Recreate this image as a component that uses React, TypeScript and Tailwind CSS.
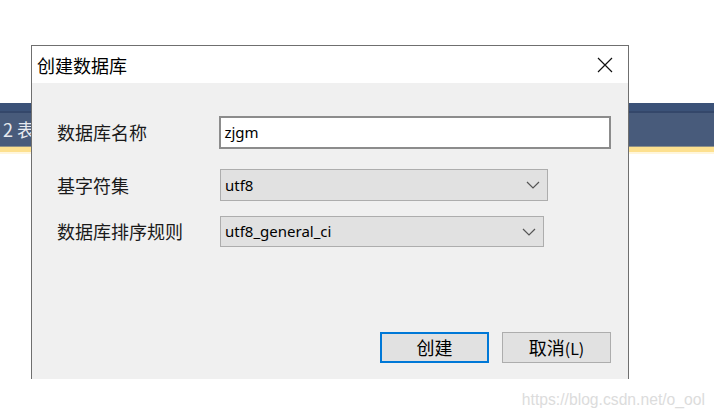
import React from "react";

const cjk = { fontFamily: '"Microsoft YaHei", "Noto Sans CJK SC", sans-serif' };
const latin = { fontFamily: '"Segoe UI", "Noto Sans", "Noto Sans CJK SC", sans-serif' };

function Chevron() {
  return (
    <svg width="14" height="8" viewBox="0 0 14 8" className="shrink-0">
      <path d="M1 1 L7 7 L13 1" fill="none" stroke="#555" strokeWidth="1.2" />
    </svg>
  );
}

export default function App() {
  return (
    <div className="relative w-[714px] h-[417px] bg-white overflow-hidden">
      <div className="h-[103px]" />
      <div className="flex flex-col">
        <div className="h-[8px] bg-[#3b5278]" />
        <div className="h-[2px] bg-[#34476a]" />
        <div className="h-[33px] bg-[#485b7b] flex items-center pl-[3px] text-[18px] text-[#e6e9ef]" style={cjk}>
          2 表
        </div>
        <div className="h-[1px] bg-[#8d8f86]" />
        <div className="h-[5px] bg-[#fde08f]" />
        <div className="h-[2px] bg-[#fff6dc]" />
      </div>

      <div className="absolute left-[31px] top-[45px] w-[598px] h-[334px] border border-b-0 border-[#6f6f6f] flex flex-col">
        <div className="h-[37px] bg-white flex items-center justify-between pl-[5px] pr-[15px]">
          <span className="text-[18px] text-black leading-none" style={cjk}>创建数据库</span>
          <svg width="16" height="16" viewBox="0 0 16 16">
            <path d="M1 1 L15 15 M15 1 L1 15" stroke="#111" strokeWidth="1.2" />
          </svg>
        </div>
        <div className="flex-1 bg-[#f0f0f0] flex flex-col pl-[25px] pr-[17px] pt-[33px] pb-[16px]">
          <div className="flex items-center h-[33px]">
            <div className="w-[163px] text-[18px] text-[#1a1a1a]" style={cjk}>数据库名称</div>
            <div className="w-[393px] h-[33px] bg-white border-2 border-[#8c8c8c] flex items-center pl-[3px] text-[15px] text-black" style={latin}>
              zjgm
            </div>
          </div>
          <div className="flex items-center h-[32px] mt-[20px]">
            <div className="w-[163px] text-[18px] text-[#1a1a1a]" style={cjk}>基字符集</div>
            <div className="w-[328px] h-[32px] bg-[#e1e1e1] border border-[#adadad] flex items-center justify-between pl-[4px] pr-[7px] text-[15px] text-black" style={latin}>
              <span>utf8</span>
              <Chevron />
            </div>
          </div>
          <div className="flex items-center h-[31px] mt-[15px]">
            <div className="w-[163px] text-[18px] text-[#1a1a1a]" style={cjk}>数据库排序规则</div>
            <div className="w-[324px] h-[31px] bg-[#e1e1e1] border border-[#adadad] flex items-center justify-between pl-[4px] pr-[7px] text-[15px] text-black" style={latin}>
              <span>utf8_general_ci</span>
              <Chevron />
            </div>
          </div>
          <div className="flex-1" />
          <div className="flex justify-end gap-[13px]">
            <button className="w-[109px] h-[31px] bg-[#e1e1e1] border-2 border-[#0078d7] text-[18px] text-black flex items-center justify-center" style={cjk}>
              创建
            </button>
            <button className="w-[109px] h-[31px] bg-[#e1e1e1] border border-[#adadad] text-[18px] text-black flex items-center justify-center" style={cjk}>
              <span>取消</span>
              <span className="text-[16px]">(L)</span>
            </button>
          </div>
        </div>
      </div>

      <div className="absolute right-[9px] top-[388px] text-[15.7px] text-[#dcdcdc]" style={{ fontFamily: '"Liberation Sans", Arial, sans-serif' }}>
        https://blog.csdn.net/o_ool
      </div>
    </div>
  );
}
